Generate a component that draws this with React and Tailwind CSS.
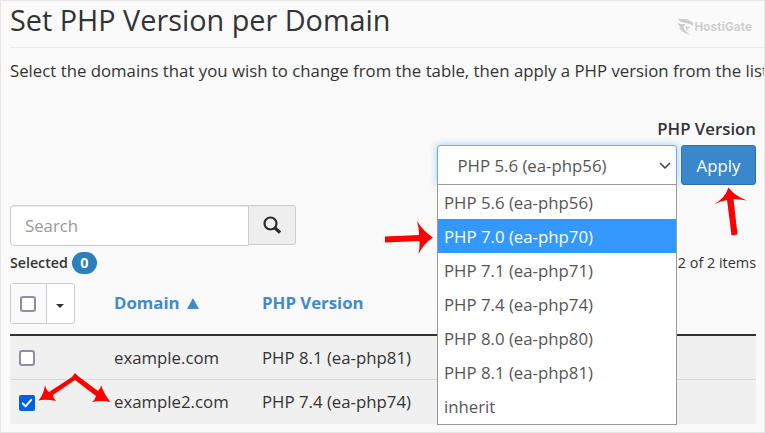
const versions = [
  'PHP 5.6 (ea-php56)',
  'PHP 7.0 (ea-php70)',
  'PHP 7.1 (ea-php71)',
  'PHP 7.4 (ea-php74)',
  'PHP 8.0 (ea-php80)',
  'PHP 8.1 (ea-php81)',
  'inherit',
];

const domains = [
  { name: 'example.com', version: 'PHP 8.1 (ea-php81)', checked: false },
  { name: 'example2.com', version: 'PHP 7.4 (ea-php74)', checked: true },
];

function Checkbox({ checked }) {
  return checked ? (
    <span className="flex size-4 items-center justify-center rounded-[2px] bg-[#0060df]">
      <svg viewBox="0 0 16 16" className="size-4" fill="none" stroke="#fff" strokeWidth="2" strokeLinecap="round" strokeLinejoin="round">
        <path d="M3.8 8.5 6.6 11.3 12.2 4.8" />
      </svg>
    </span>
  ) : (
    <span className="block size-4 rounded-[3px] border-2 border-[#8f8f9d] bg-white" />
  );
}

function Logo() {
  return (
    <div className="flex items-center text-[#cdcdcd]">
      <svg viewBox="0 0 17 17" className="h-[17px] w-[17px]" fill="currentColor">
        <path d="M1 .5C4 2 8 0 11.500 2 13.500 3.200 15 3.500 16.500 5.500L15.500 8C13.500 5.500 11.500 6 9.500 5 6 4 2.500 4.500 1 .5Z" />
        <path d="M.5 5C3 6.500 6 5.500 9 6.500 6.500 7.500 6 9.500 7.500 11.500L12.500 16.800C7.500 15 2.500 12.500 2.200 9L4.500 10C3 8.500 1.500 7.500.5 5Z" />
        <path d="M9.500 8c1 1.300 2.500 1.300 4 .7-.8 1.500-2 2-3.200 1.700L12 13.500C9 11.500 8 10 9.500 8Z" />
      </svg>
      <span className="ml-px pt-[2px] font-['Inter','Open_Sans',sans-serif] text-[11.6px] leading-none font-bold tracking-[0.15px]">HostiGate</span>
    </div>
  );
}

export default function App() {
  return (
    <div className="relative h-[433px] w-[765px] overflow-hidden border border-[#e6e6e6] bg-[#fafafa] pl-[9px] font-['Open_Sans','Noto_Sans',sans-serif] text-[16.8px] text-[#333]">
      <header className="flex h-[47px] justify-between border-b border-[#eaeaea] pr-[12px]">
        <h1 className="text-[28.8px] leading-[38px] whitespace-nowrap">Set PHP Version per Domain</h1>
        <div className="pt-[17px]"><Logo /></div>
      </header>
      <p className="mt-[11px] h-6 leading-6 whitespace-nowrap">
        Select the domains that you wish to change from the table, then apply a PHP version from the list
      </p>

      <div className="mr-[8px] flex flex-col items-end pt-[35px]">
        <div className="h-[27px] leading-[22px] font-semibold">PHP Version</div>
        <div className="flex gap-1">
          <div className="relative h-10 w-60">
            <div className="flex h-10 items-center justify-between rounded-t-[3px] border border-[#66afe9] bg-white pt-px pr-[5px] pl-[19.500px] text-[#555] shadow-[0_0_8px_rgba(102,175,233,0.6)]">
              <span>PHP 5.6 (ea-php56)</span>
              <svg viewBox="0 0 12 8" className="h-2 w-3" fill="none" stroke="#444" strokeWidth="1.600" strokeLinecap="round" strokeLinejoin="round">
                <path d="m1.500 1.500 4.500 4.500 4.500-4.500" />
              </svg>
            </div>
            <ul className="absolute top-[39px] left-0 z-10 w-60 border border-[#999] bg-white pb-px text-[#555]">
              {versions.map((v, i) => (
                <li key={v} className={i === 1 ? 'flex h-[34.05px] items-center bg-[#3399ff] pt-px pl-1.5 text-white' : 'flex h-[34.05px] items-center pt-px pl-1.5'}>
                  {v}
                </li>
              ))}
            </ul>
          </div>
          <button className="h-10 w-[75px] rounded-[3px] border border-[#2a6faf] bg-[#3a87cb] pt-px text-white">Apply</button>
        </div>
      </div>

      <div className="mt-5 flex items-start">
        <div className="flex h-[41px] w-[239px] items-center rounded-l-[4px] border border-[#ccc] bg-white pl-[14px] text-[#999] shadow-[inset_0_1px_1px_rgba(0,0,0,0.075)]">Search</div>
        <button className="-ml-px flex h-10 w-12 items-center justify-center rounded-r-[3px] border border-[#ccc] bg-[#eee]">
          <svg viewBox="0 0 18 18" className="size-[18px]" fill="none" stroke="#2b2b2b">
            <circle cx="7.500" cy="7.500" r="6" strokeWidth="2.200" />
            <path d="m12 12 5 4.500" strokeWidth="3.300" />
          </svg>
        </button>
      </div>

      <div className="mt-[6px] mr-[8px] flex h-[22px] items-center justify-between text-[14.4px]">
        <div className="flex items-center">
          <span className="text-[14.2px] font-semibold">Selected</span>
          <span className="ml-1 flex h-[22px] w-[25px] items-center justify-center rounded-full bg-[#2a7fbc] font-bold text-white">0</span>
        </div>
        <span>2 of 2 items</span>
      </div>

      <div className="mr-[8px] pt-[9px]">
        <div className="flex h-[53px] items-start border-b-2 border-[#333]">
          <div className="flex h-[41px] w-[65px] rounded-[3px] border border-[#ccc] bg-white">
            <div className="flex w-[36px] items-center justify-center border-r border-[#ccc] bg-[#fafafa] pr-px"><Checkbox /></div>
            <div className="flex flex-1 items-center justify-center pt-[5px] pr-px">
              <span className="border-x-4 border-t-4 border-x-transparent border-t-[#333]" />
            </div>
          </div>
          <div className="ml-[39px] flex h-10 w-[148px] items-center gap-[7px] font-bold text-[#428bca]">
            Domain
            <svg viewBox="0 0 12 11" className="h-[11px] w-3" fill="currentColor"><path d="M6 0 12 11H0Z" /></svg>
          </div>
          <div className="flex h-10 items-center font-bold text-[#428bca]">PHP Version</div>
        </div>
        {domains.map((d, i) => (
          <div key={d.name} className={i === 0 ? 'flex h-[44px] items-center border-b border-[#d8d8d8] bg-[#f0f0f0] pl-[9px]' : 'flex h-[44px] items-center bg-[#f0f0f0] pl-[9px]'}>
            <div className={d.checked ? 'w-[95px] pt-[2px]' : 'w-[95px]'}><Checkbox checked={d.checked} /></div>
            <div className="w-[148px]">{d.name}</div>
            <div>{d.version}</div>
          </div>
        ))}
      </div>

      <svg viewBox="0 0 765 433" className="pointer-events-none absolute -top-px -left-px z-20 h-[433px] w-[765px] max-w-none" fill="red">
        <path d="M385 236.500 419 235Q419 227 417 221 423 231 433 237.500 423 244 418.500 254.500 420 247 419.500 241L385 242.500Z" />
        <path d="M728.500 187.500Q735 196 747 200.500 739 199 733.500 199L737.500 234.500 731.500 235.500 727 200Q720 201 714 204.500 725 198 728.500 187.500Z" />
        <path d="M75 373 78 376 98 391Q101 388 101 385 104 394 110.500 402 102 400 92 402 95 400 96 396L75 380 53 395Q53 398 56 401 46 399 38.500 400.500 44 394 45 385 46 390 49 392L72 377Z" />
      </svg>
    </div>
  );
}
